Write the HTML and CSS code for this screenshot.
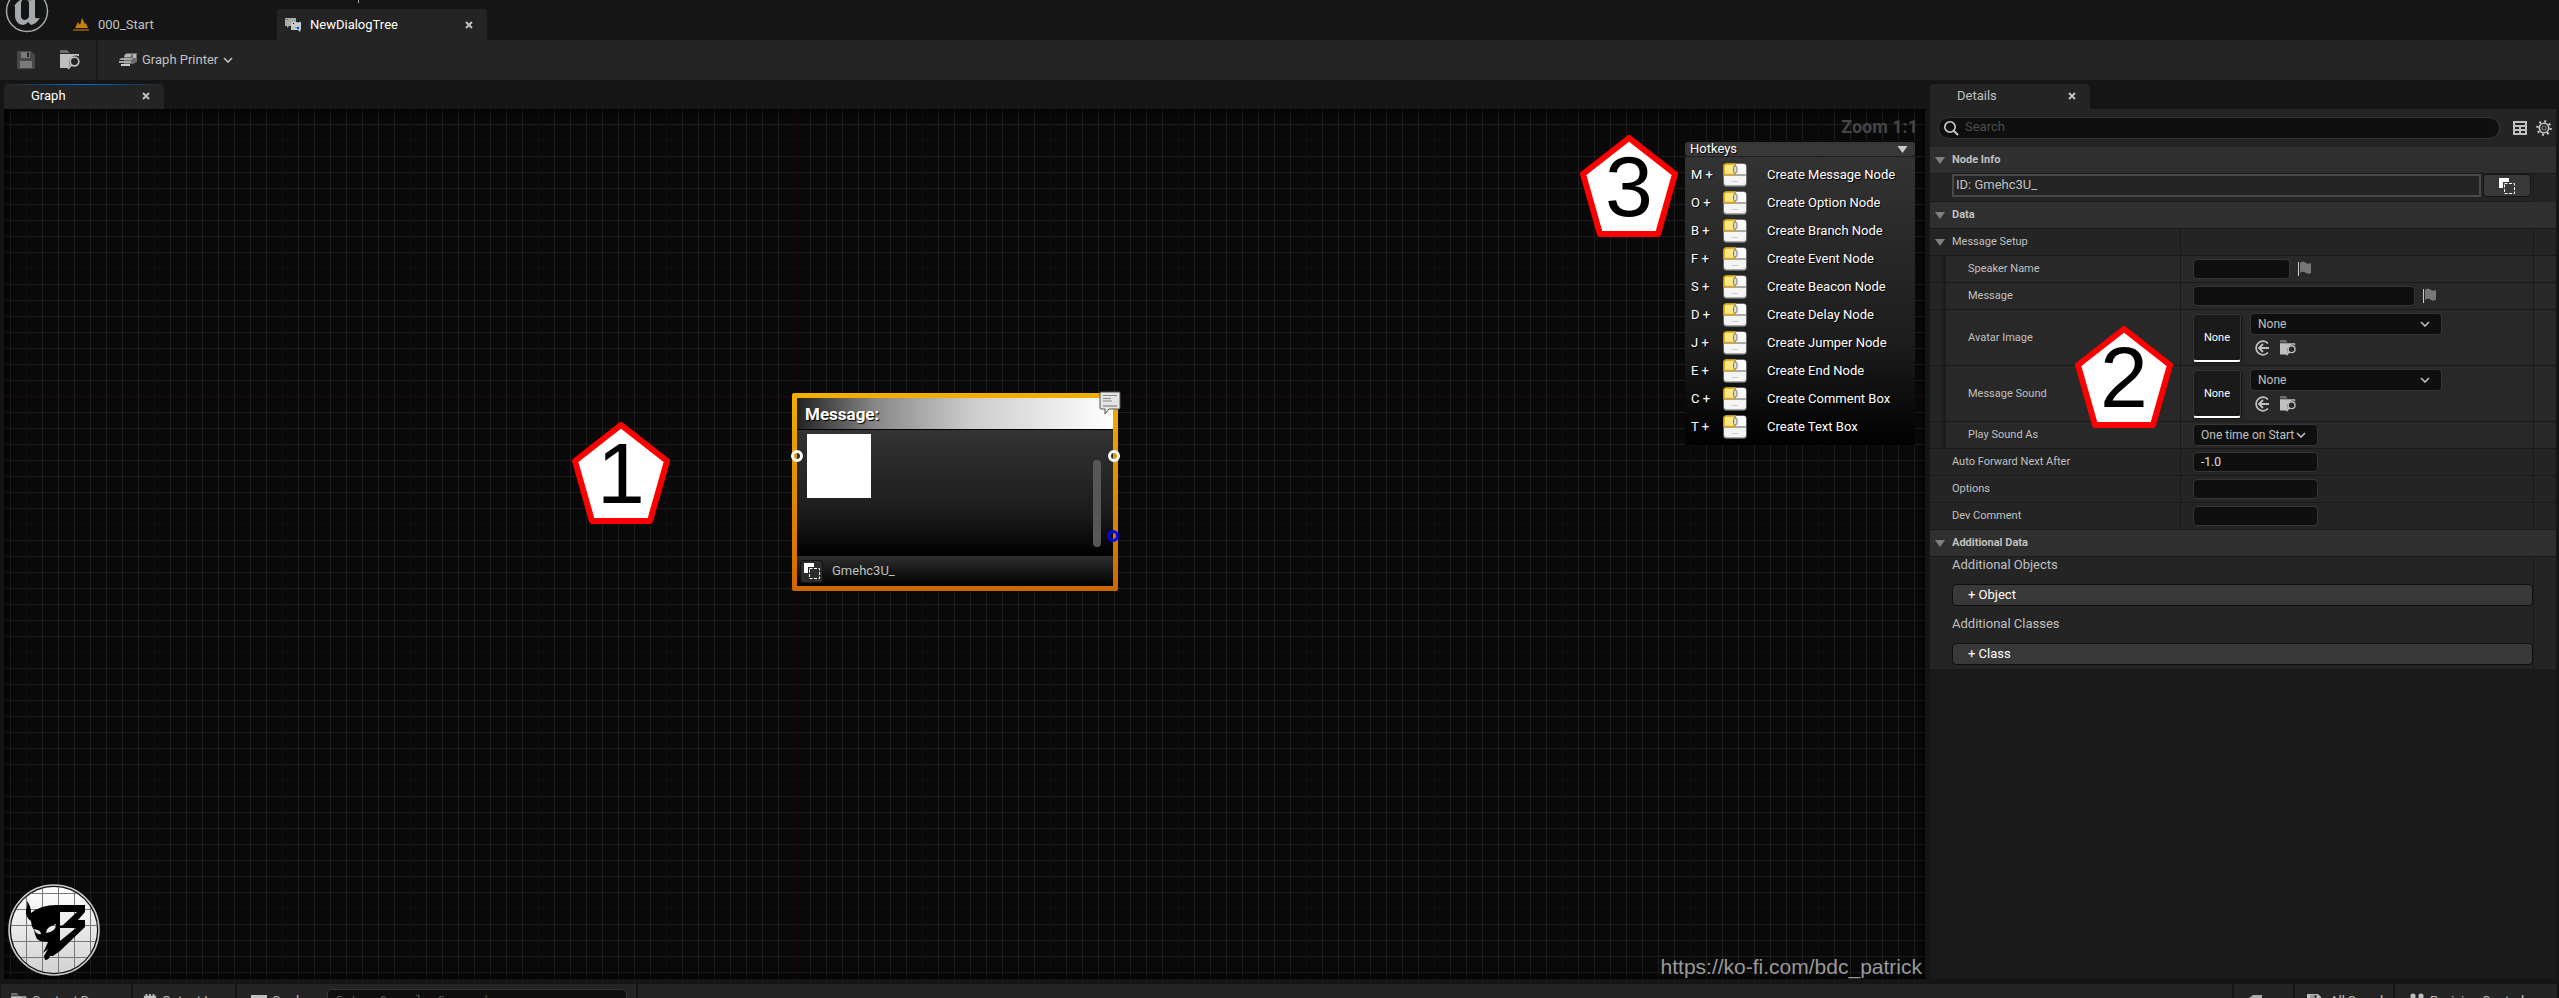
FILE: index.html
```html
<!DOCTYPE html>
<html lang="en">
<head>
<meta charset="utf-8">
<title>NewDialogTree</title>
<link rel="stylesheet" href="styles.css">
</head>
<body>
<svg class="defs" aria-hidden="true">
  <symbol id="chevron" viewBox="0 0 10 6"><path d="M1 1l4 4 4-4" fill="none" stroke="currentColor" stroke-width="1.6"/></symbol>
  <symbol id="cross" viewBox="0 0 8 8"><path d="M1 1l6 6M7 1L1 7" stroke="currentColor" stroke-width="2"/></symbol>
  <symbol id="browse" viewBox="0 0 20 20"><path d="M0 1q0-1 1-1h6l3 3H0z" fill="#6e6e6e"/><path d="M0 4h19v2.500a6.500 6.500 0 0 0-9 8.500l-2 3H0z" fill="#c0c0c0"/><circle cx="14.500" cy="11.500" r="4.300" fill="none" stroke="#c0c0c0" stroke-width="1.700"/><path d="M11.500 15L8 19" stroke="#c0c0c0" stroke-width="1.800"/></symbol>
  <symbol id="floppy" viewBox="0 0 18 18"><path d="M1 0h13l4 4v13q0 1-1 1H1q-1 0-1-1V1q0-1 1-1z" fill="currentColor"/><path d="M4 1h9v6H4z" fill="#979797"/><path d="M10 1.500h2v4.500h-2z" fill="#242424"/><path d="M3 10h12v7H3z" fill="#979797"/></symbol>
  <symbol id="copy" viewBox="0 0 16 16"><path d="M0 0h10v4H4v6H0z" fill="#fff"/><path d="M5.500 5.500h10v10h-10z" fill="none" stroke="#fff" stroke-dasharray="3 1.500"/></symbol>
  <symbol id="flag" viewBox="0 0 14 16"><path d="M.5 1v14" stroke="#ccc"/><path d="M2 2q3-3 6 0 2 1.500 5 0v10q-3 1.500-5 0-3-2.500-6 0z" fill="#777"/></symbol>
  <symbol id="use" viewBox="0 0 16 16"><path d="M14 3.500A6.800 6.800 0 1 0 14 12.500" fill="none" stroke="currentColor" stroke-width="1.700"/><path d="M15 8H5M9 4L5 8l4 4" fill="none" stroke="currentColor" stroke-width="1.900"/></symbol>
  <symbol id="arrow" viewBox="0 0 10 7"><path d="M0 0h10L5 7z" fill="currentColor"/></symbol>
  <symbol id="mouse" viewBox="0 0 24 24"><rect x=".5" y=".5" width="23" height="23" rx="3" fill="#a9a9a9"/><path d="M1 13h22v6q0 3-3 3H4q-3 0-3-3z" fill="#f4f4f4"/><path d="M13 1h7q3 0 3 3v7H13z" fill="#fafafa"/><path d="M3.500 1H12v10.500H1V3.500Q1 1 3.500 1z" fill="#fdea86" stroke="#dba514" stroke-width="1.600"/><rect x="10.500" y="3" width="3.500" height="7" rx="1.700" fill="#ddd" stroke="#777"/><path d="M9 18.500h6" stroke="#ccc"/></symbol>
  <symbol id="pentagon" viewBox="0 0 98 102"><path d="M49 3L95 39 78 99H20L3 39z" fill="#fff" stroke="#f00" stroke-width="6" stroke-linejoin="round"/></symbol>
</svg>

<header class="titlebar">
  <svg class="ue-logo" viewBox="0 0 44 44"><circle cx="22" cy="22" r="20.500" fill="#151515" stroke="#a5a9aa" stroke-width="1.500"/><path d="M9 17q4-6 9-7-2 2-2 5v13q1 3 4 3 2 0 4-3V14q0-2-2-3 5 1 8-2v19q0 2 5 1-4 6-9 7l-3-3q-2 3-5 3-7-1-8-8V17q-1-1-1 0z" fill="#a4aaab"/></svg>
  <button class="doc-tab doc-level"><svg class="i16" viewBox="0 0 16 16"><path d="M2 11l3-6 2 3 2-7 3 6 1-1 2 5z" fill="#c57e0a"/><path d="M0 12h16v2H0z" fill="#7d4b0b"/></svg>000_Start</button>
  <div class="doc-tab doc-active"><svg class="i16" viewBox="0 0 16 16"><path d="M0 2q0-1 1-1h10v8H4l-2 2V9H0z" fill="#aaa"/><path d="M6 5h10v7l-1 3-2-2H6z" fill="#c8c8c8"/><path d="M2 2h1v1H2z" fill="red"/><path d="M5 3h1v1H5z" fill="#9c3"/><path d="M8 6h1v1H8z" fill="#000"/><path d="M12 5h2v1h-2zM10 10h2v1h-2z" fill="#1bf"/><path d="M12 10h2v2h-2z" fill="#04f"/></svg><span>NewDialogTree</span><button class="close" aria-label="Close NewDialogTree"><svg><use href="#cross"/></svg></button></div>
  <i class="menu-edge"></i>
</header>

<nav class="toolbar">
  <div class="tool-group">
    <button class="tool dim" aria-label="Save"><svg class="i18"><use href="#floppy"/></svg></button>
    <button class="tool" aria-label="Browse"><svg class="i20"><use href="#browse"/></svg></button>
  </div>
  <button class="printer"><svg class="i18" viewBox="0 0 18 18"><path d="M5 4l3-2h10v9l-4 2H5z" fill="#6d6d6d"/><path d="M7 3h6l-2 3H5zM14 3h3v4h-3z" fill="#b5b5b5"/><path d="M2 7h12l-2 2H0zM0 10h12v2H0z" fill="#a8a8a8"/><path d="M2 13h9v2H2z" fill="#ccc"/></svg>Graph Printer<svg class="chev"><use href="#chevron"/></svg></button>
</nav>

<main class="workspace">
  <section class="graph-pane">
    <div class="tabs"><div class="tab tab-focus"><span>Graph</span><button class="close" aria-label="Close Graph"><svg><use href="#cross"/></svg></button></div></div>
    <div class="canvas">
      <i class="axis-x"></i><i class="axis-y"></i>
      <div class="marker marker-1"><svg><use href="#pentagon"/></svg><span>1</span></div>
      <div class="marker marker-3"><svg><use href="#pentagon"/></svg><span>3</span></div>

      <article class="node">
        <h2>Message:</h2>
        <div class="node-body"><div class="avatar"></div><div class="thumb"></div></div>
        <footer><button class="mini-copy" aria-label="Copy ID"><svg class="i16"><use href="#copy"/></svg></button><span>Gmehc3U_</span></footer>
        <i class="pin pin-in"></i><i class="pin pin-out"></i><i class="pin pin-blue"></i>
        <svg class="bubble" viewBox="0 0 22 24"><path d="M2 1h18q1 0 1 1v15q0 1-1 1H10l-4 5v-5H2q-1 0-1-1V2q0-1 1-1z" fill="#e4e4e4" stroke="#555"/><path d="M4 4.500h14M4 7.500h8M4 10h9" stroke="#888"/><path d="M4 15h14" stroke="#aaa" stroke-width="2"/></svg>
      </article>

      <aside class="overlay">
        <div class="zoom">Zoom 1:1</div>
        <div class="hotkeys">
          <button class="hot-head">Hotkeys<svg><use href="#arrow"/></svg></button>
          <ul>
            <li><kbd>M +</kbd><svg><use href="#mouse"/></svg><span>Create Message Node</span></li>
            <li><kbd>O +</kbd><svg><use href="#mouse"/></svg><span>Create Option Node</span></li>
            <li><kbd>B +</kbd><svg><use href="#mouse"/></svg><span>Create Branch Node</span></li>
            <li><kbd>F +</kbd><svg><use href="#mouse"/></svg><span>Create Event Node</span></li>
            <li><kbd>S +</kbd><svg><use href="#mouse"/></svg><span>Create Beacon Node</span></li>
            <li><kbd>D +</kbd><svg><use href="#mouse"/></svg><span>Create Delay Node</span></li>
            <li><kbd>J +</kbd><svg><use href="#mouse"/></svg><span>Create Jumper Node</span></li>
            <li><kbd>E +</kbd><svg><use href="#mouse"/></svg><span>Create End Node</span></li>
            <li><kbd>C +</kbd><svg><use href="#mouse"/></svg><span>Create Comment Box</span></li>
            <li><kbd>T +</kbd><svg><use href="#mouse"/></svg><span>Create Text Box</span></li>
          </ul>
        </div>
      </aside>

      <svg class="brand" viewBox="0 0 92 92">
        <defs><linearGradient id="disc" x1="0" y1="0" x2="0" y2="1"><stop offset="0" stop-color="#fff"/><stop offset="1" stop-color="#d2d2d2"/></linearGradient><clipPath id="disc-clip"><circle cx="46" cy="46" r="43"/></clipPath></defs>
        <circle cx="46" cy="46" r="45" fill="#111" stroke="#ccc" stroke-width="1.500"/>
        <circle cx="46" cy="46" r="43" fill="url(#disc)"/>
        <path clip-path="url(#disc-clip)" d="M18.500 0v92M34.500 0v92M50.500 0v92M66.500 0v92M82.500 0v92M0 9.500h92M0 25.500h92M0 41.500h92M0 57.500h92M0 73.500h92M0 89.500h92" stroke="#777" stroke-width="1"/>
        <path fill-rule="evenodd" d="M19 17q4 5 4 12 10-8 25-8h29v7l-7 8h7v7L52 67l-7 5h-3q-1 4-5 4l-1-4 4-7-5 4 5-11q-8 0-11-3-2-3-3-9-3-4-3-9-6-4-5-11 2-4 1-9zM52 28h17L54 42h-2zM54 44h14L52 57V44zM38 49q0-6 10-9 0 8-10 9zM26 45q7 1 7 5-5 1-7-5z" fill="#000"/>
      </svg>
      <div class="watermark">https://ko-fi.com/bdc_patrick</div>
    </div>
  </section>

  <section class="details">
    <div class="tabs"><div class="tab"><span>Details</span><button class="close" aria-label="Close Details"><svg><use href="#cross"/></svg></button></div></div>
    <div class="search-row">
      <label class="search"><svg class="i16" viewBox="0 0 16 16"><circle cx="7" cy="7" r="5.200" fill="none" stroke="#d0d0d0" stroke-width="1.600"/><path d="M11 11l4 4" stroke="#d0d0d0" stroke-width="1.800"/></svg><input type="search" placeholder="Search" aria-label="Search"></label>
      <button class="tool" aria-label="Table view"><svg class="i14" viewBox="0 0 14 14"><path fill-rule="evenodd" d="M0 0h14v14H0zM2 2v2h10V2zM2 6v2h4V6zM8 6v2h4V6zM2 10v2h4v-2zM8 10v2h4v-2z" fill="#c0c0c0"/></svg></button>
      <button class="tool" aria-label="Settings"><svg class="i16" viewBox="0 0 16 16"><circle cx="8" cy="8" r="6.600" fill="none" stroke="#c0c0c0" stroke-width="2.400" stroke-dasharray="2 3.180"/><circle cx="8" cy="8" r="4.700" fill="none" stroke="#c0c0c0" stroke-width="1.600"/><circle cx="8" cy="8" r="2" fill="none" stroke="#777" stroke-width="1.200"/></svg></button>
    </div>

    <div class="props">
      <h3><svg><use href="#arrow"/></svg>Node Info</h3>
      <div class="wide id-row"><input class="id-box" aria-label="Node ID" value="ID: Gmehc3U_" readonly><button class="copy-btn" aria-label="Copy ID"><svg class="i16"><use href="#copy"/></svg></button></div>

      <h3><svg><use href="#arrow"/></svg>Data</h3>
      <div class="prop group"><span class="name"><svg><use href="#arrow"/></svg>Message Setup</span><div class="value"></div></div>
      <div class="prop child"><label class="name" for="speaker">Speaker Name</label><div class="value"><input id="speaker" class="field w-s"><svg class="flag"><use href="#flag"/></svg></div></div>
      <div class="prop child"><label class="name" for="message">Message</label><div class="value"><input id="message" class="field w-l"><svg class="flag"><use href="#flag"/></svg></div></div>
      <div class="prop child asset"><label class="name" for="avatar">Avatar Image</label><div class="value"><div class="preview">None</div><div class="picker"><div class="select w-a"><select id="avatar"><option>None</option></select><svg><use href="#chevron"/></svg></div><div class="actions"><button aria-label="Use selected"><svg class="i16"><use href="#use"/></svg></button><button aria-label="Browse to asset"><svg class="i16"><use href="#browse"/></svg></button></div></div></div></div>
      <div class="prop child asset"><label class="name" for="sound">Message Sound</label><div class="value"><div class="preview">None</div><div class="picker"><div class="select w-a"><select id="sound"><option>None</option></select><svg><use href="#chevron"/></svg></div><div class="actions"><button aria-label="Use selected"><svg class="i16"><use href="#use"/></svg></button><button aria-label="Browse to asset"><svg class="i16"><use href="#browse"/></svg></button></div></div></div></div>
      <div class="prop child"><label class="name" for="play">Play Sound As</label><div class="value"><div class="select w-m"><select id="play"><option>One time on Start</option></select><svg><use href="#chevron"/></svg></div></div></div>
      <div class="prop"><label class="name" for="forward">Auto Forward Next After</label><div class="value"><input id="forward" class="field w-m" value="-1.0"></div></div>
      <div class="prop"><label class="name" for="options">Options</label><div class="value"><input id="options" class="field w-m"></div></div>
      <div class="prop"><label class="name" for="comment">Dev Comment</label><div class="value"><input id="comment" class="field w-m"></div></div>

      <h3><svg><use href="#arrow"/></svg>Additional Data</h3>
      <div class="wide extras"><p>Additional Objects</p><button>+ Object</button><p>Additional Classes</p><button>+ Class</button></div>
    </div>
    <div class="marker marker-2"><svg><use href="#pentagon"/></svg><span>2</span></div>
  </section>
</main>

<footer class="statusbar">
  <button class="status"><svg class="i16"><use href="#browse"/></svg>Content Drawer</button>
  <button class="status output"><svg class="i14" viewBox="0 0 14 16"><path d="M0 2h2V0h2v2h2V0h2v2h2V0h2v2h2v14H0z" fill="#c0c0c0"/></svg>Output Log</button>
  <div class="status cmd"><svg class="i16" viewBox="0 0 16 16"><path d="M0 2h16v12H0zM1 5v8h14V5z" fill="#c0c0c0" fill-rule="evenodd"/></svg><button>Cmd<svg class="chev"><use href="#chevron"/></svg></button><input placeholder="Enter Console Command" aria-label="Console command"></div>
  <div class="status filler"></div>
  <button class="status derived"><svg class="i14" viewBox="0 0 14 14"><path d="M0 5l5-4h9v12H0z" fill="#a9aca8"/></svg><svg class="chev"><use href="#chevron"/></svg></button>
  <button class="status saved"><svg class="i14" viewBox="0 0 18 18"><use href="#floppy"/></svg>All Saved</button>
  <button class="status revision"><svg class="i16" viewBox="0 0 16 16"><circle cx="4" cy="3" r="2.600" fill="#c0c0c0"/><circle cx="12" cy="3" r="2.600" fill="#c0c0c0"/><path d="M4 3v12M12 3v5l-8 4" fill="none" stroke="#c0c0c0" stroke-width="2"/></svg>Revision Control<svg class="chev"><use href="#chevron"/></svg></button>
</footer>
</body>
</html>
```

FILE: styles.css
```css
* { box-sizing: border-box; }
html, body { height: 100%; }
body {
  margin: 0;
  display: flex;
  flex-direction: column;
  overflow: hidden;
  background: #151515;
  color: #c0c0c0;
  font: 13px/16px Roboto, "Liberation Sans", sans-serif;
}
button, input, select { font: inherit; color: inherit; margin: 0; }
button { background: none; border: 0; padding: 0; display: flex; align-items: center; white-space: nowrap; }
h2, h3, p, ul { margin: 0; padding: 0; }
svg { display: block; flex: none; }
.defs { position: absolute; width: 0; height: 0; }
.i14 { width: 14px; height: 14px; }
.i16 { width: 16px; height: 16px; }
.i18 { width: 18px; height: 18px; }
.i20 { width: 20px; height: 20px; }
.chev { width: 10px; height: 6px; }

/* title bar */
.titlebar { position: relative; flex: none; height: 40px; display: flex; align-items: flex-end; overflow: hidden; padding-left: 5px; }
.menu-edge { position: absolute; left: 358px; top: 0; width: 1px; height: 3px; background: #a0a0a0; }
.ue-logo { width: 44px; height: 44px; margin-bottom: 7px; }
.doc-tab { height: 31px; display: flex; align-items: center; border-radius: 4px 4px 0 0; }
.doc-level { width: 204px; margin-left: 24px; gap: 9px; }
.doc-active { width: 210px; padding: 0 14px 0 8px; gap: 9px; background: #242424; color: #fff; }
.doc-active .close, .tab .close { margin-left: auto; color: #c0c0c0; }
.close svg { width: 8px; height: 8px; }

/* toolbar */
.toolbar { flex: none; height: 40px; display: flex; align-items: center; background: #242424; }
.tool-group { height: 38px; display: flex; align-items: center; gap: 25px; width: 98px; padding-left: 17px; border-right: 2px solid #1a1a1a; }
.dim { color: #555; opacity: 0.75; }
.printer { margin-left: 21px; gap: 5px; }

/* workspace */
.workspace { flex: 1; min-height: 0; display: flex; gap: 5px; padding: 0 3px 5px 4px; }
.graph-pane, .details { display: flex; flex-direction: column; min-width: 0; }
.graph-pane { flex: 1; }
.details { flex: 0 0 626px; position: relative; background: #1a1a1a; }
.tabs { flex: none; height: 29px; display: flex; align-items: flex-end; background: #151515; }
.tab { position: relative; overflow: hidden; width: 160px; height: 25px; display: flex; align-items: center; padding: 0 14px 2px 27px; background: #242424; border-radius: 4px 4px 0 0; }
.tab-focus { color: #fff; }
.tab-focus::before { content: ""; position: absolute; inset: 0 0 auto; height: 1px; background: linear-gradient(90deg, transparent, #0070e0, transparent); }

.canvas {
  flex: 1;
  min-height: 0;
  position: relative;
  overflow: hidden;
  background:
    linear-gradient(90deg, #0f0f0f 1px, transparent 1px) 22px 0 / 128px 128px,
    linear-gradient(#0f0f0f 1px, transparent 1px) 0 31px / 128px 128px,
    linear-gradient(90deg, #1e1e1e 1px, transparent 1px) 6px 0 / 16px 16px,
    linear-gradient(#1e1e1e 1px, transparent 1px) 0 15px / 16px 16px,
    #090909;
  box-shadow: inset 0 0 12px #000;
}
.axis-x { position: absolute; left: 0; right: 0; top: 287px; height: 1px; background: #2a0505; }
.axis-y { position: absolute; top: 0; bottom: 0; left: 790px; width: 1px; background: #1c0505; }

.marker { position: absolute; width: 98px; height: 102px; display: grid; color: #000; font: 86px/102px "Liberation Sans", Arial, sans-serif; text-align: center; }
.marker > * { grid-area: 1 / 1; width: 98px; height: 102px; }
.marker-1 { left: 568px; top: 313px; }
.marker-3 { right: 247px; top: 26px; }
.marker-2 { left: 145px; top: 246px; }

/* node */
.node { position: absolute; left: 788px; top: 284px; width: 326px; padding: 5px; border-radius: 2px; background: linear-gradient(#f0b000, #cd6700); }
.node h2 { height: 32px; padding-left: 8px; border-bottom: 1px solid #000; background: linear-gradient(90deg, #222, #888 25%, #ccc 55%, #fff); color: #fff; font-size: 17px; line-height: 32px; text-shadow: 1px 1px 1px #000; }
.node-body { height: 126px; display: flex; justify-content: space-between; padding: 4px 12px 0 10px; background: linear-gradient(#333, #1c1c1c 65%, #000); }
.avatar { width: 64px; height: 64px; background: #fff; }
.thumb { width: 8px; height: 87px; margin-top: 26px; border-radius: 4px; background: #575757; }
.node footer { height: 30px; display: flex; align-items: center; gap: 9px; padding-left: 3px; background: linear-gradient(#2e2e2e, #000); }
.mini-copy { width: 23px; height: 23px; justify-content: center; background: #2c2c2c; border: 1px solid #111; border-radius: 3px; }
.pin { position: absolute; width: 12px; height: 12px; border: 3px solid #fff; border-radius: 50%; }
.pin-in { left: -1px; top: 57px; }
.pin-out { right: -2px; top: 57px; }
.pin-blue { right: -1px; top: 137px; border-color: #00f; }
.bubble { position: absolute; right: -3px; top: -2px; width: 22px; height: 24px; }

/* canvas overlays */
.overlay { position: absolute; top: 6px; right: 7px; display: flex; flex-direction: column; align-items: flex-end; gap: 3px; }
.zoom { font-weight: 700; font-size: 18px; line-height: 24px; color: #464646; }
.hotkeys { width: 230px; margin-right: 3px; color: #fff; text-shadow: 1px 1px 1px #000; }
.hot-head { width: 100%; height: 14px; justify-content: space-between; padding: 0 7px 0 5px; background: #383838; border-radius: 3px; text-shadow: inherit; }
.hot-head svg { width: 11px; height: 7px; color: #ccc; }
.hotkeys ul { margin-top: 1px; padding: 4px 0; list-style: none; background: linear-gradient(#333, #1c1c1c 65%, #000); }
.hotkeys li { height: 28px; display: grid; grid-template-columns: 32px 44px 1fr; align-items: center; padding-left: 6px; }
.hotkeys kbd { font: inherit; }
.hotkeys li svg { width: 24px; height: 24px; }
.brand { position: absolute; left: 4px; bottom: 3px; width: 92px; height: 92px; }
.watermark { position: absolute; right: 3px; bottom: 0; font: 21px/24px "Liberation Sans", Arial, sans-serif; color: #999; }

/* details */
.search-row { flex: none; height: 38px; display: flex; align-items: center; gap: 9px; padding: 0 4px 0 8px; background: #242424; }
.search { flex: 1; height: 22px; margin-right: 4px; display: flex; align-items: center; gap: 6px; padding: 0 4px; background: #0f0f0f; border: 1px solid #353535; border-radius: 11px; }
.search input { flex: 1; min-width: 0; padding: 0 0 2px; border: 0; background: none; outline: 0; }
.search input::placeholder { color: #4c4c4c; }
.props { background: #242424; font-size: 12px; }
.props h3 { height: 27px; display: flex; align-items: center; gap: 7px; padding-left: 5px; background: #2f2f2f; border-bottom: 1px solid #1a1a1a; font-size: 11px; font-weight: 700; }
.props h3 svg, .name svg { width: 10px; height: 7px; color: #808080; }
.wide { margin-right: 22px; padding-left: 22px; border-right: 1px solid #1a1a1a; }
.id-row { height: 28px; display: flex; align-items: flex-start; gap: 2px; padding-right: 2px; border-bottom: 1px solid #1a1a1a; font-size: 13px; }
.id-box { flex: 1; height: 23px; padding: 0 2px 3px; border: 2px solid #484848; background: none; }
.copy-btn { width: 48px; height: 23px; justify-content: center; background: #383838; border: 1px solid #151515; border-radius: 4px; }

.prop { height: 27px; display: grid; grid-template-columns: 250px minmax(0, 1fr) 22px; border-bottom: 1px solid #1a1a1a; }
.name { display: flex; align-items: center; padding-left: 22px; font-size: 11px; }
.group .name { gap: 7px; padding-left: 5px; }
.value { display: flex; align-items: center; gap: 8px; padding-left: 12px; border: solid #1a1a1a; border-width: 0 1px; }
.child { background: linear-gradient(90deg, #242424 10px, #1a1a1a 16px, #282828 16px); }
.child .name { padding-left: 38px; }
.asset { height: 56px; }
.asset .value { align-items: flex-start; padding-top: 3px; }
.field { height: 20px; padding: 0 7px; background: #0f0f0f; border: 1px solid #353535; border-radius: 4px; color: #e0e0e0; }
.w-s { width: 97px; }
.w-l { width: 222px; }
.w-m { width: 125px; }
.w-a { width: 192px; }
.flag { width: 14px; height: 16px; }
.preview { width: 48px; height: 48px; display: grid; place-items: center; margin: 1px 1px 0 0; background: #1a1a1a; border: 1px solid #333; border-bottom: 2px solid #fff; border-radius: 3px; box-shadow: 1px 1px 2px #111; font-size: 11px; color: #fff; }
.picker { display: grid; gap: 5px; }
.select { height: 22px; display: grid; align-items: center; }
.select > * { grid-area: 1 / 1; }
.select select { width: 100%; height: 22px; padding: 0 7px; appearance: none; background: #0f0f0f; border: 1px solid #353535; border-radius: 4px; }
.select svg { width: 10px; height: 6px; justify-self: end; margin-right: 12px; pointer-events: none; }
.actions { display: flex; gap: 10px; padding-left: 4px; }

.extras { height: 112px; font-size: 13px; }
.extras p { height: 27px; }
.extras p + button { width: 100%; height: 22px; margin-bottom: 10px; padding-left: 15px; background: #383838; border: 1px solid #0f0f0f; border-radius: 4px; color: #fff; }

/* status bar */
.statusbar { flex: none; height: 14px; display: flex; align-items: flex-start; gap: 2px; overflow: hidden; padding: 0 2px 0 1px; }
.status { height: 34px; display: flex; align-items: center; gap: 5px; padding: 0 10px; background: #242424; }
.status:first-child { width: 130px; }
.output { width: 102px; }
.cmd { width: 399px; padding: 0 9px 0 14px; }
.cmd button { gap: 6px; }
.cmd input { width: 300px; height: 24px; margin-left: auto; padding: 0 8px; background: #0f0f0f; border: 1px solid #353535; border-radius: 4px; font: 12px "DejaVu Sans Mono", monospace; }
.cmd input::placeholder { color: #575757; }
.filler { flex: 1; }
.derived { width: 59px; padding: 0 14px; }
.saved { width: 98px; gap: 9px; padding: 0 12px; color: #c0c0c0; }
.revision { width: 162px; padding: 0 14px; }
```
